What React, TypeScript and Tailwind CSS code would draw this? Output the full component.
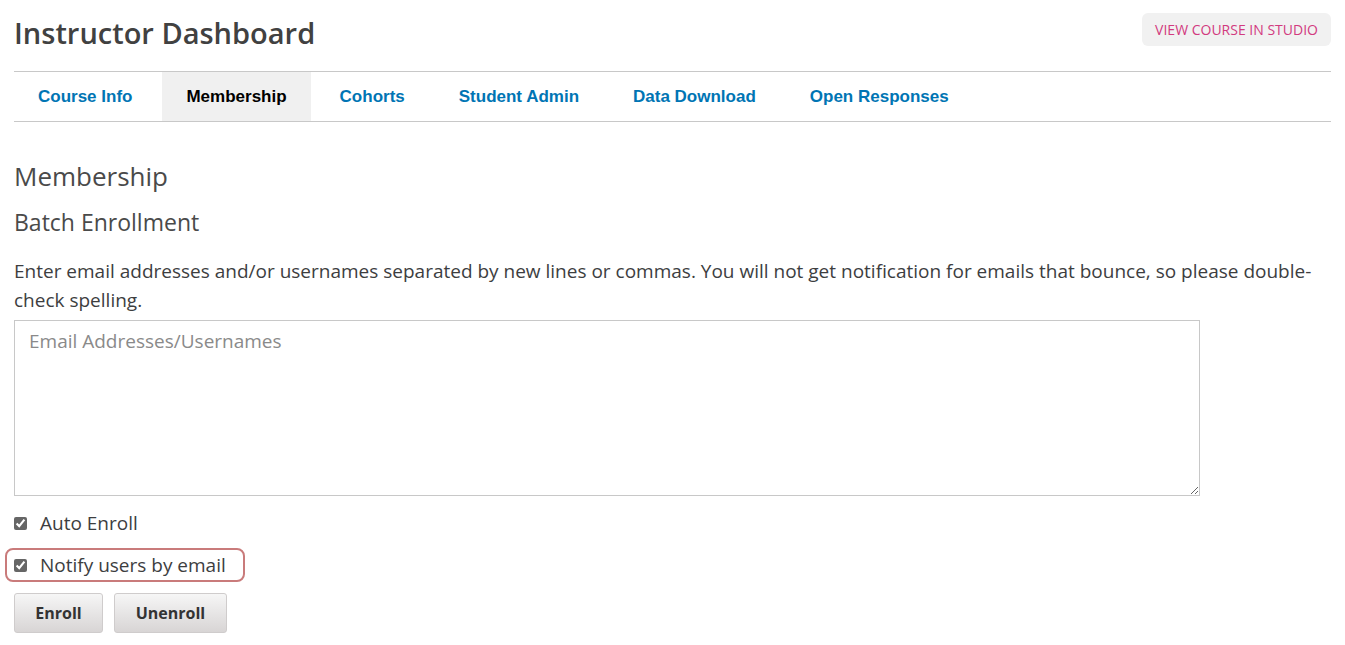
import { useState } from 'react'

const TABS = ['Course Info', 'Membership', 'Cohorts', 'Student Admin', 'Data Download', 'Open Responses']

export default function App() {
  const [active, setActive] = useState('Membership')
  const [autoEnroll, setAutoEnroll] = useState(true)
  const [notify, setNotify] = useState(true)

  return (
    <div className="min-h-screen bg-white px-[14px] font-['Open_Sans',sans-serif] text-[#3d3e3f]">
      {/* ── Header ── */}
      <div className="flex h-[71px] items-start justify-between">
        <h1 className="mt-[12px] text-[29px] font-semibold leading-[42px] text-[#414141]">
          Instructor Dashboard
        </h1>
        <button className="mt-[13px] h-[33px] rounded-[6px] bg-[#f1f1f1] px-[13px] text-[14px] uppercase text-[#d23a7f]">
          View Course in Studio
        </button>
      </div>

      {/* ── Tabs ── */}
      <nav className="flex h-[51px] border-y border-[#c8c8c8] font-['Liberation_Sans',Arial,sans-serif]">
        {TABS.map((t) => (
          <button
            key={t}
            onClick={() => setActive(t)}
            className={
              t === active
                ? 'mr-[5px] bg-[#f0f0f0] px-[24px] text-[17px] font-bold text-black'
                : 'mr-[6px] px-[24px] text-[17px] font-bold text-[#0075b4]'
            }
          >
            {t}
          </button>
        ))}
      </nav>

      {/* ── Membership ── */}
      <h2 className="mt-[36px] text-[26px] leading-[36px] text-[#4a4a4a]">Membership</h2>
      <h3 className="mt-[13px] text-[23px] leading-[30px] text-[#4a4a4a]">Batch Enrollment</h3>
      <p className="mt-[20px] pr-[10px] text-[19px] leading-[29px] text-[#3d3e3f]">
        Enter email addresses and/or usernames separated by new lines or commas. You will not get notification
        for emails that bounce, so please double-check spelling.
      </p>

      <textarea
        placeholder="Email Addresses/Usernames"
        className="mt-[5px] block h-[176px] w-[1186px] border border-[#c8c8c8] px-[14px] py-[6px] text-[19px] leading-[28px] text-[#3d3e3f] outline-none placeholder:text-[#8a8a8a]"
      />

      <div className="mt-[15px] flex flex-col">
        <label className="flex h-[24px] items-center gap-[13px] text-[19px]">
          <input
            type="checkbox"
            checked={autoEnroll}
            onChange={(e) => setAutoEnroll(e.target.checked)}
            className="h-[13px] w-[13px] accent-[#666]"
          />
          Auto Enroll
        </label>

        <div className="-ml-[9px] mt-[13px] flex h-[34px] w-[240px] items-center rounded-[8px] border-2 border-[#c97b7b] pl-[7px]">
          <label className="flex items-center gap-[13px] text-[19px]">
            <input
              type="checkbox"
              checked={notify}
              onChange={(e) => setNotify(e.target.checked)}
              className="h-[13px] w-[13px] accent-[#666]"
            />
            Notify users by email
          </label>
        </div>
      </div>

      {/* ── Actions ── */}
      <div className="mt-[11px] flex gap-[11px]">
        <button className="h-[40px] w-[89px] rounded-[3px] border border-[#cfcccc] bg-gradient-to-b from-[#f6f6f6] to-[#d8d5d5] text-[16px] font-bold text-[#333]">
          Enroll
        </button>
        <button className="h-[40px] w-[113px] rounded-[3px] border border-[#cfcccc] bg-gradient-to-b from-[#f6f6f6] to-[#d8d5d5] text-[16px] font-bold text-[#333]">
          Unenroll
        </button>
      </div>
    </div>
  )
}
